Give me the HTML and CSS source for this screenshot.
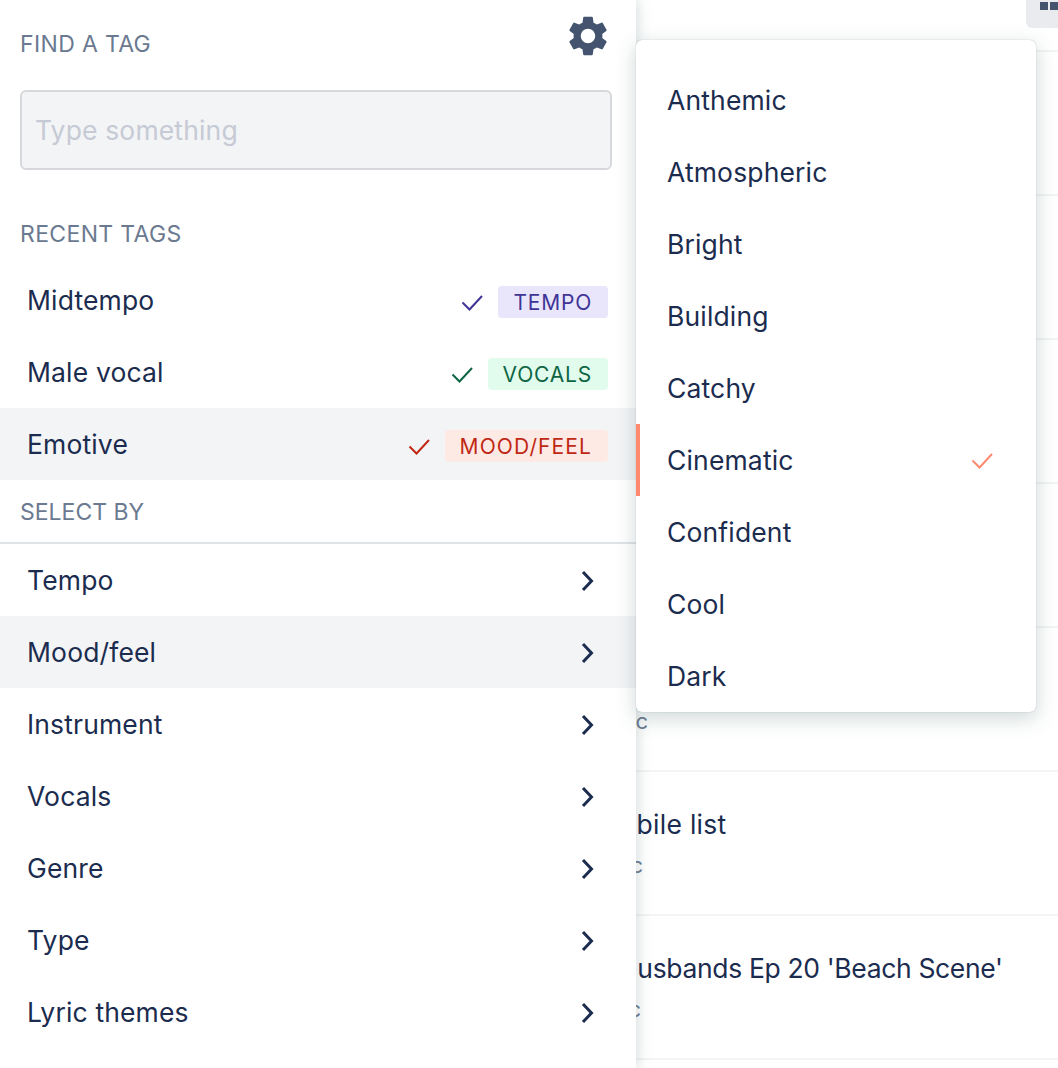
FILE: index.html
```html
<!DOCTYPE html>
<html lang="en">
<head>
<meta charset="utf-8">
<title>Find a tag</title>
<link rel="stylesheet" href="styles.css">
</head>
<body>
<svg class="defs" width="0" height="0" aria-hidden="true">
  <symbol id="check" viewBox="0 0 24 24"><path d="M2.5 12.5 L9.5 19.5 L22 6" fill="none" stroke="currentColor" stroke-width="2"/></symbol>
  <symbol id="chev" viewBox="0 0 24 24"><path d="M7 4 L15.5 13 L7 22" fill="none" stroke="currentColor" stroke-width="3"/></symbol>
</svg>

<main class="list">
  <div class="toolbar"><span class="view-btn"><i></i><i></i></span></div>
  <div class="track track-first"></div>
  <div class="track"></div>
  <div class="track"></div>
  <div class="track"></div>
  <div class="track"></div>
  <div class="track"><span class="sub sub-a">Music</span></div>
  <div class="track"><span class="title title-b">Mobile list</span><span class="sub sub-b">Music</span></div>
  <div class="track"><span class="title title-c">Husbands Ep 20 'Beach Scene'</span><span class="sub sub-c">Music</span></div>
</main>

<aside class="panel">
  <header class="panel-head">
    <h2 class="label label-find">FIND A TAG</h2>
    <svg class="gear" viewBox="0 0 24 24"><path d="M19.14,12.94c0.04-0.3,0.06-0.61,0.06-0.94c0-0.32-0.02-0.64-0.07-0.94l2.03-1.58c0.18-0.14,0.23-0.41,0.12-0.61 l-1.92-3.32c-0.12-0.22-0.37-0.29-0.59-0.22l-2.39,0.96c-0.5-0.38-1.03-0.7-1.62-0.94L14.4,2.81c-0.04-0.24-0.24-0.41-0.48-0.41 h-3.84c-0.24,0-0.43,0.17-0.47,0.41L9.25,5.35C8.66,5.59,8.12,5.92,7.63,6.29L5.24,5.33c-0.22-0.08-0.47,0-0.59,0.22L2.74,8.87 C2.62,9.08,2.66,9.34,2.86,9.48l2.03,1.58C4.84,11.36,4.8,11.69,4.8,12s0.02,0.64,0.07,0.94l-2.03,1.58 c-0.18,0.14-0.23,0.41-0.12,0.61l1.92,3.32c0.12,0.22,0.37,0.29,0.59,0.22l2.39-0.96c0.5,0.38,1.03,0.7,1.62,0.94l0.36,2.54 c0.05,0.24,0.24,0.41,0.48,0.41h3.84c0.24,0,0.44-0.17,0.47-0.41l0.36-2.54c0.59-0.24,1.13-0.56,1.62-0.94l2.39,0.96 c0.22,0.08,0.47,0,0.59-0.22l1.92-3.32c0.12-0.22,0.07-0.47-0.12-0.61L19.14,12.94z M12,15.6c-1.98,0-3.6-1.62-3.6-3.6 s1.62-3.6,3.6-3.6s3.6,1.62,3.6,3.6S13.98,15.6,12,15.6z"/></svg>
  </header>
  <div class="search"><input class="search-input" type="text" placeholder="Type something"></div>
  <h2 class="label label-recent">RECENT TAGS</h2>
  <ul class="rows">
    <li class="row"><span>Midtempo</span><span class="meta tempo"><svg class="check"><use href="#check"/></svg><span class="tag">TEMPO</span></span></li>
    <li class="row"><span>Male vocal</span><span class="meta vocals"><svg class="check"><use href="#check"/></svg><span class="tag">VOCALS</span></span></li>
    <li class="row row-hover"><span>Emotive</span><span class="meta mood"><svg class="check"><use href="#check"/></svg><span class="tag">MOOD/FEEL</span></span></li>
  </ul>
  <h2 class="label label-select">SELECT BY</h2>
  <ul class="rows">
    <li class="row"><span>Tempo</span><svg class="chev"><use href="#chev"/></svg></li>
    <li class="row row-hover"><span>Mood/feel</span><svg class="chev"><use href="#chev"/></svg></li>
    <li class="row"><span>Instrument</span><svg class="chev"><use href="#chev"/></svg></li>
    <li class="row"><span>Vocals</span><svg class="chev"><use href="#chev"/></svg></li>
    <li class="row"><span>Genre</span><svg class="chev"><use href="#chev"/></svg></li>
    <li class="row"><span>Type</span><svg class="chev"><use href="#chev"/></svg></li>
    <li class="row"><span>Lyric themes</span><svg class="chev"><use href="#chev"/></svg></li>
  </ul>
</aside>

<ul class="menu">
  <li class="menu-item">Anthemic</li>
  <li class="menu-item">Atmospheric</li>
  <li class="menu-item">Bright</li>
  <li class="menu-item">Building</li>
  <li class="menu-item">Catchy</li>
  <li class="menu-item menu-item-on">Cinematic<svg class="check"><use href="#check"/></svg></li>
  <li class="menu-item">Confident</li>
  <li class="menu-item">Cool</li>
  <li class="menu-item">Dark</li>
</ul>
</body>
</html>
```
FILE: styles.css
```css
* { box-sizing: border-box; }
html, body { margin: 0; height: 100%; overflow: hidden; background: #fff; }
body { font-family: Inter, "Noto Sans", sans-serif; color: #1b2c4f; font-size: 26.5px; letter-spacing: .15px; position: relative; }
ul { list-style: none; margin: 0; padding: 0; }
.defs { position: absolute; }

/* background list */
.list { display: block; }
.toolbar { position: absolute; top: 0; right: 0; }
.view-btn { display: flex; gap: 2px; width: 32px; height: 28px; padding: 2px 0 0 14px; background: #e9ebef; border-bottom-left-radius: 6px; }
.view-btn i { display: block; width: 8px; height: 8px; background: #44546f; flex: none; }
.track { height: 144px; border-bottom: 2px solid #f2f4f5; position: relative; }
.track-first { height: 52px; }
.title { position: absolute; top: 35px; white-space: nowrap; line-height: 34px; letter-spacing: -.35px; }
.title-b { left: 596px; letter-spacing: .3px; }
.title-c { left: 618px; }
.sub { position: absolute; top: 78px; color: #6b7a90; font-size: 22px; line-height: 30px; letter-spacing: -.3px; }
.sub-a { left: 587px; }
.sub-b { left: 582px; }
.sub-c { left: 580px; }

/* left panel */
.panel { position: absolute; left: 0; top: 0; bottom: 0; width: 636px; background: #fff; box-shadow: 0 0 14px rgba(70,100,100,.28); }
.panel-head { display: flex; justify-content: space-between; height: 90px; padding: 12px 24px 0 20px; }
.label { margin: 0; font-size: 23px; line-height: 30px; font-weight: 400; color: #6b7a90; letter-spacing: .35px; }
.label-find { margin-top: 17px; }
.gear { width: 48px; height: 48px; fill: #44546f; }
.search { padding: 0 24px 0 20px; }
.search-input { display: block; width: 100%; height: 80px; padding: 0 13px; border: 2px solid #d6d8db; border-radius: 6px; background: #f3f4f6; font: inherit; letter-spacing: inherit; color: inherit; outline: none; }
.search-input::placeholder { color: #c6cad5; opacity: 1; }
.label-recent { padding: 49px 20px 15px; }
.label-select { padding: 17px 20px 15px; border-bottom: 2px solid #dfe3e6; letter-spacing: 0; }
.row { display: flex; align-items: center; justify-content: space-between; height: 72px; padding: 0 28px 0 27px; }
.row-hover { background: #f3f4f6; }
.meta { display: flex; align-items: center; gap: 14px; position: relative; top: 2px; }
.check { width: 24px; height: 24px; }
.tag { display: block; height: 32px; padding: 1px 16px 0 15px; border-radius: 4px; font-size: 21px; line-height: 31px; letter-spacing: .8px; }
.tempo { color: #3f3496; }
.tempo .tag { background: #e9e6fc; }
.vocals { color: #0d6544; }
.vocals .tag { background: #e1fcec; }
.mood { color: #c02814; }
.mood .tag { background: #feeae5; letter-spacing: 1.1px; }
.chev { width: 24px; height: 24px; color: #1b2c4f; margin-right: 8px; }

/* dropdown */
.menu { position: absolute; left: 636px; top: 40px; width: 400px; height: 672px; padding-top: 24px; background: #fff; border-radius: 6px; box-shadow: 0 0 1px rgba(60,90,90,.5), 0 6px 20px rgba(60,90,90,.25); overflow: hidden; }
.menu-item { display: flex; align-items: center; justify-content: space-between; height: 72px; padding: 0 42px 0 31px; }
.menu-item-on { border-left: 4px solid #ff8a70; padding-left: 27px; }
.menu-item-on .check { color: #ff8a70; }
```
